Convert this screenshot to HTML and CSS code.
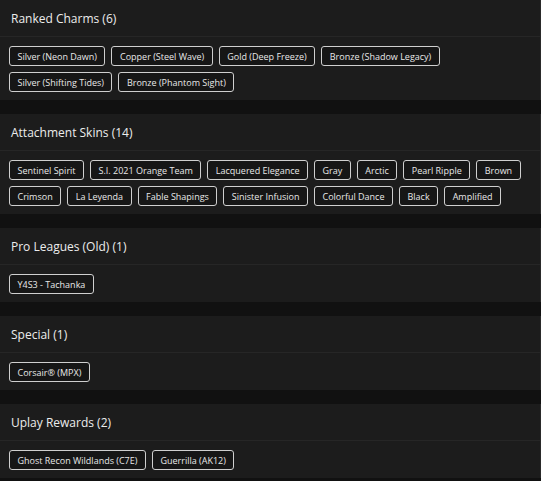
FILE: index.html
```html
<!DOCTYPE html>
<html>
<head>
<meta charset="utf-8">
<link rel="stylesheet" href="styles.css">
</head>
<body>
<div class="list">
  <section class="card">
    <div class="card-head">Ranked Charms (6)</div>
    <div class="card-body">
      <span class="chip">Silver (Neon Dawn)</span>
      <span class="chip">Copper (Steel Wave)</span>
      <span class="chip">Gold (Deep Freeze)</span>
      <span class="chip">Bronze (Shadow Legacy)</span>
      <span class="chip">Silver (Shifting Tides)</span>
      <span class="chip">Bronze (Phantom Sight)</span>
    </div>
  </section>
  <section class="card">
    <div class="card-head">Attachment Skins (14)</div>
    <div class="card-body">
      <span class="chip">Sentinel Spirit</span>
      <span class="chip">S.I. 2021 Orange Team</span>
      <span class="chip">Lacquered Elegance</span>
      <span class="chip">Gray</span>
      <span class="chip">Arctic</span>
      <span class="chip">Pearl Ripple</span>
      <span class="chip">Brown</span>
      <span class="chip">Crimson</span>
      <span class="chip">La Leyenda</span>
      <span class="chip">Fable Shapings</span>
      <span class="chip">Sinister Infusion</span>
      <span class="chip">Colorful Dance</span>
      <span class="chip">Black</span>
      <span class="chip">Amplified</span>
    </div>
  </section>
  <section class="card">
    <div class="card-head">Pro Leagues (Old) (1)</div>
    <div class="card-body">
      <span class="chip">Y4S3 - Tachanka</span>
    </div>
  </section>
  <section class="card">
    <div class="card-head">Special (1)</div>
    <div class="card-body">
      <span class="chip">Corsair® (MPX)</span>
    </div>
  </section>
  <section class="card">
    <div class="card-head">Uplay Rewards (2)</div>
    <div class="card-body">
      <span class="chip">Ghost Recon Wildlands (C7E)</span>
      <span class="chip">Guerrilla (AK12)</span>
    </div>
  </section>
</div>
</body>
</html>
```
FILE: styles.css
```css
html, body {
  margin: 0;
  padding: 0;
  background: #111111;
}
body {
  font-family: "Open Sans", "Noto Sans", sans-serif;
  color: #e8e8e8;
}
.list {
  display: flex;
  flex-direction: column;
  gap: 14px;
  width: 541px;
}
.card {
  background: #1c1c1c;
  border-right: 1px solid #2a2a2a;
}
.card-head {
  height: 37px;
  box-sizing: border-box;
  display: flex;
  align-items: center;
  padding: 0 11px;
  font-size: 12px;
  font-weight: 500;
  border-bottom: 1px solid #262626;
  color: #ececec;
}
.card-body {
  display: flex;
  flex-wrap: wrap;
  gap: 6px;
  padding: 9px 9px 8px;
}
.chip {
  box-sizing: border-box;
  height: 20px;
  display: inline-flex;
  align-items: center;
  padding: 0 7.5px;
  font-size: 9px;
  font-weight: 500;
  border: 1.5px solid #cfcfcf;
  border-radius: 3px;
  background: #161616;
  color: #e8e8e8;
  white-space: nowrap;
}
```
